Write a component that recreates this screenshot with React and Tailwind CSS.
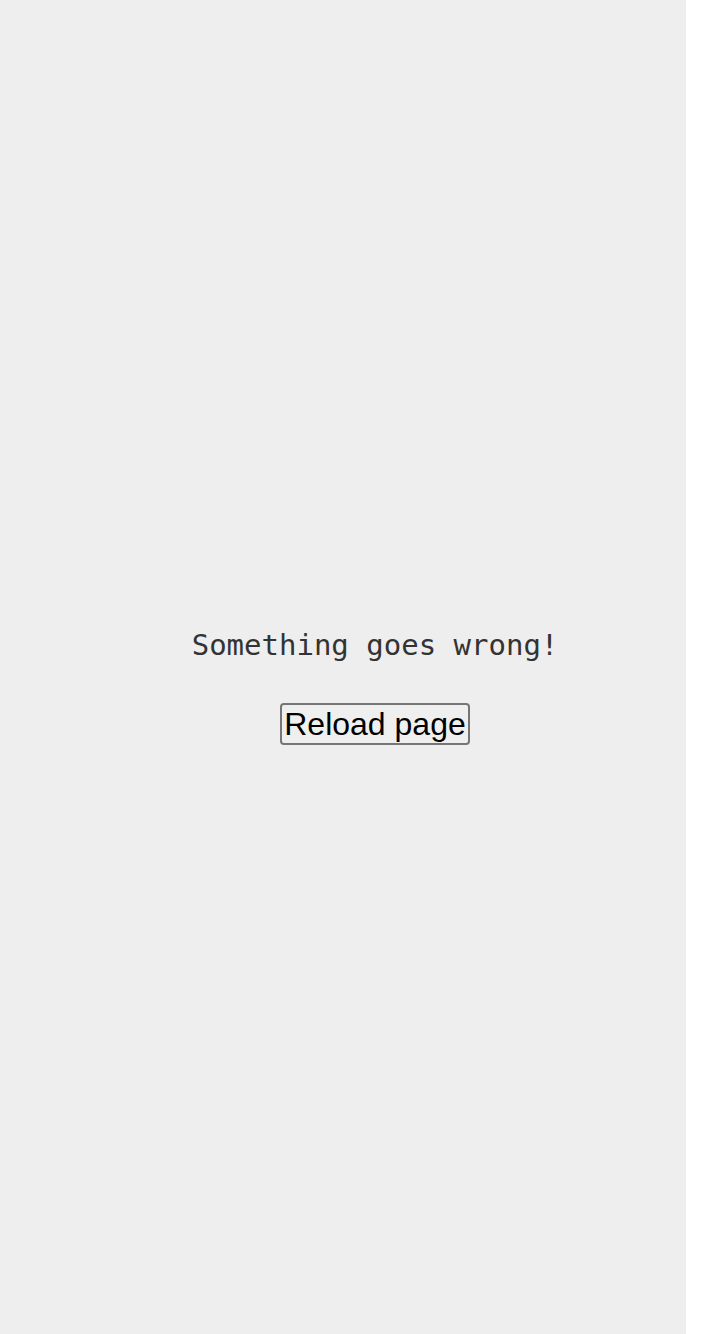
import React from "react";

export default function App() {
  return (
    <div className="w-[686px] h-[1334px] bg-[#eeeeee] flex flex-col items-center justify-center pl-[64px] pt-[38px]">
      <p className="text-[29px] leading-[36px] text-[#333333] font-['DejaVu_Sans_Mono',monospace]">
        Something goes wrong!
      </p>
      <button
        onClick={() => window.location.reload()}
        className="mt-[40px] h-[42px] px-[2px] text-[32px] leading-none text-black bg-[#efefef] border-2 border-[#767676] rounded-[4px] font-['Liberation_Sans',Arial,sans-serif]"
      >
        Reload page
      </button>
    </div>
  );
}
